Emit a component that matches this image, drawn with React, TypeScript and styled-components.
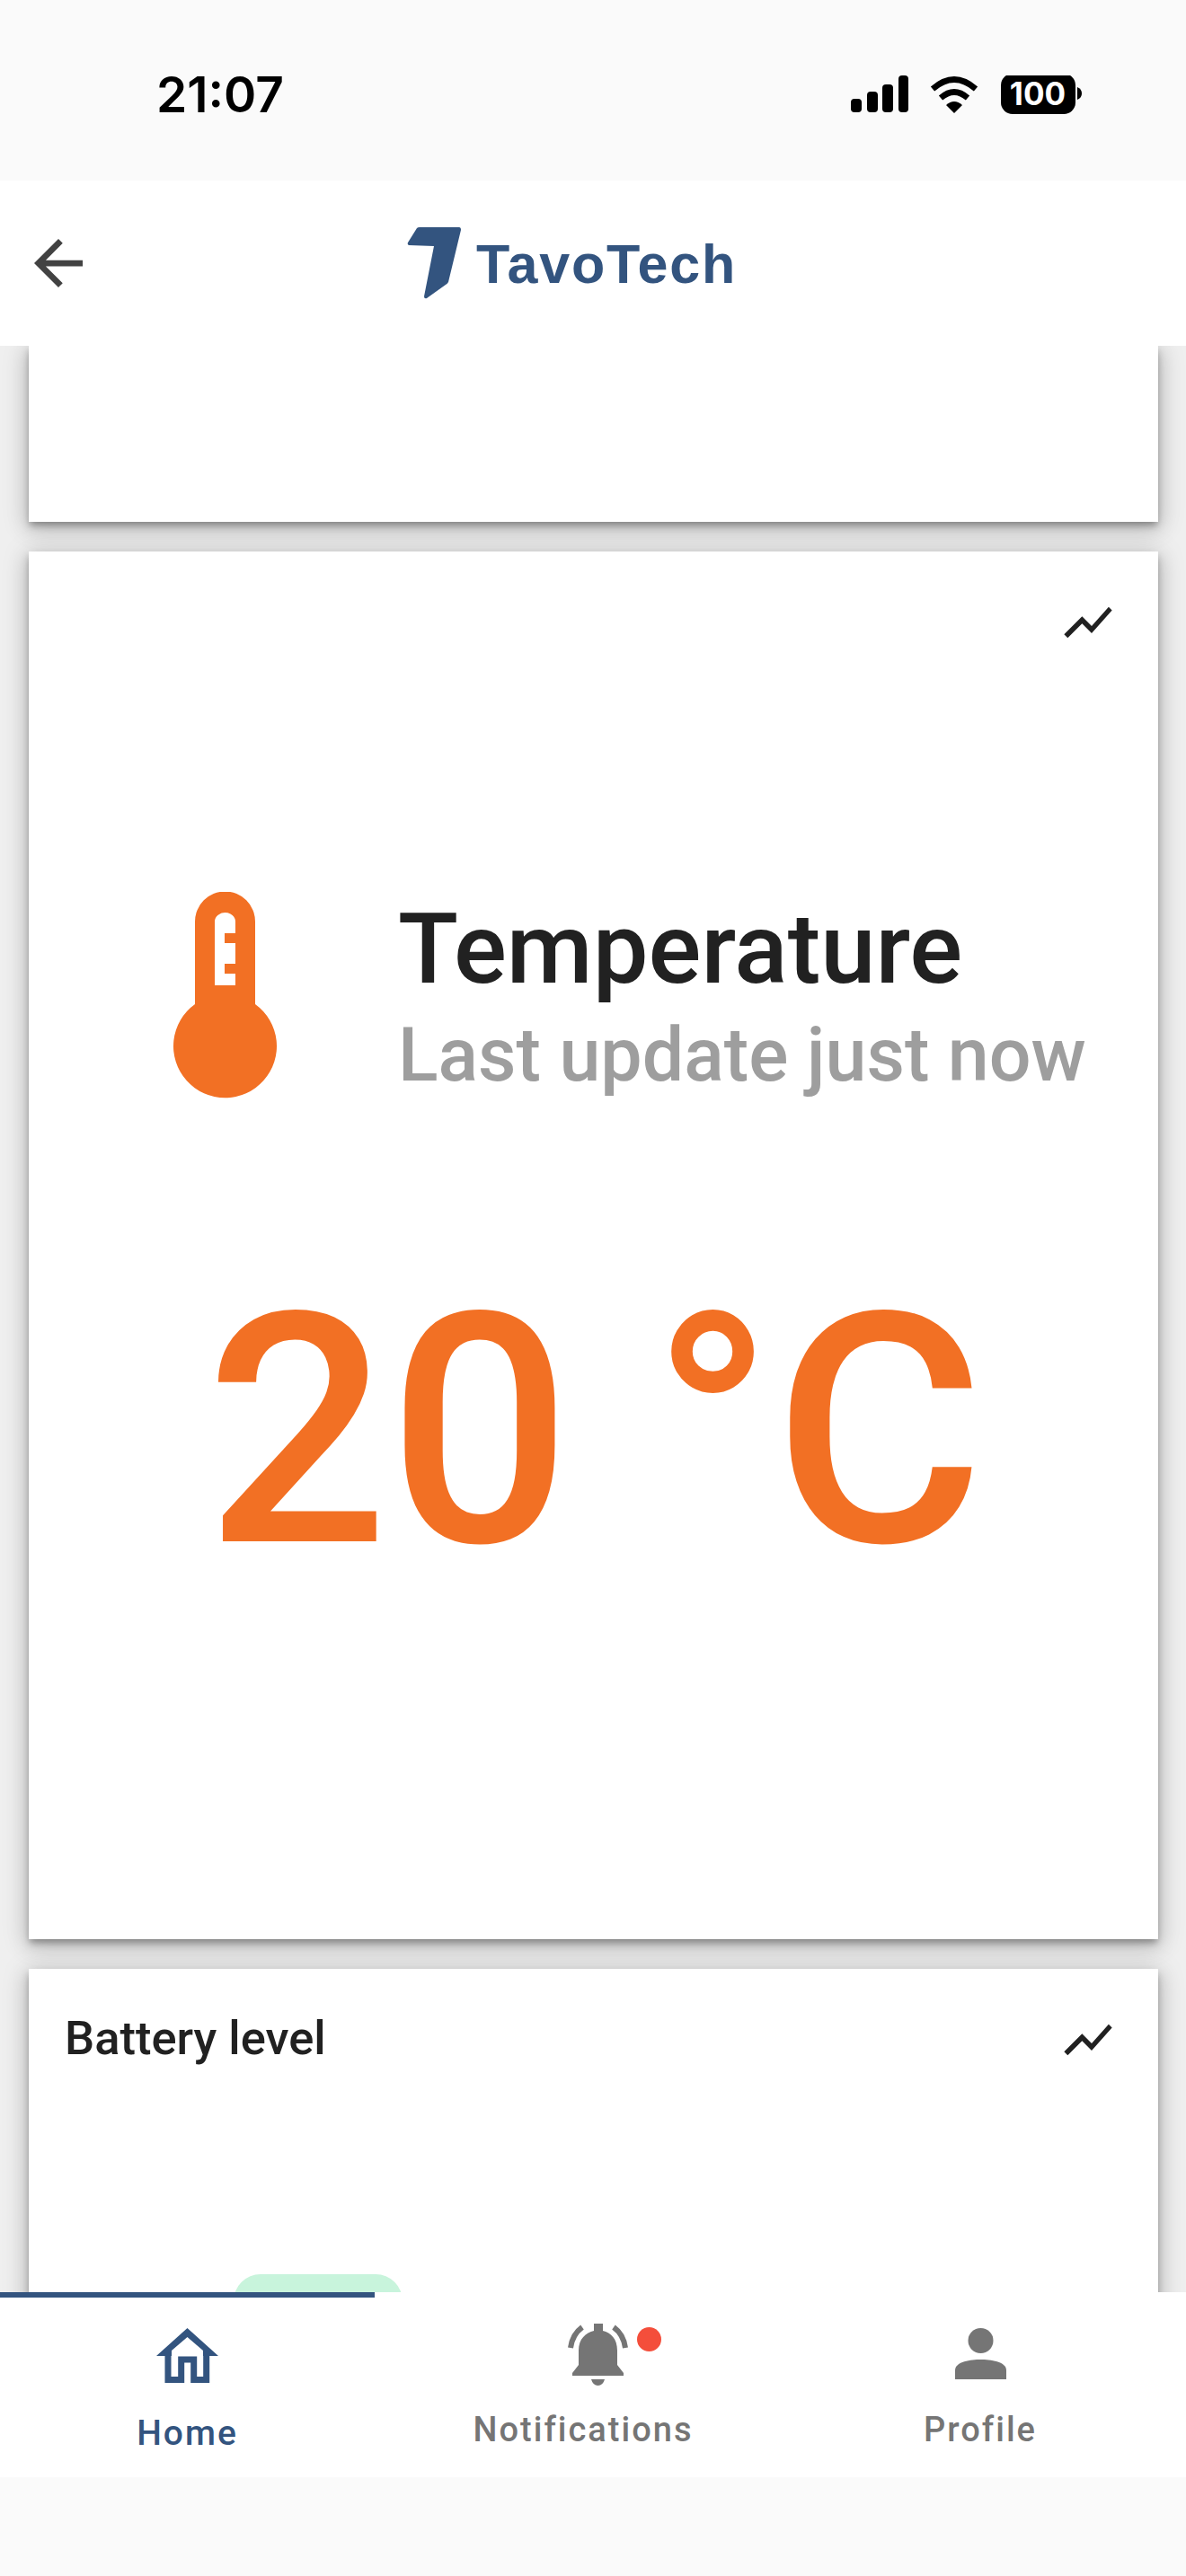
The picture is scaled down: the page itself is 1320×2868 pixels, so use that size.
import React from "react";
import styled, { createGlobalStyle } from "styled-components";

const Global = createGlobalStyle`
  html, body { margin: 0; padding: 0; background: #fafafa; }
  * { box-sizing: border-box; }
`;

const Page = styled.div`
  width: 1320px;
  height: 2868px;
  display: flex;
  flex-direction: column;
  overflow: hidden;
  font-family: Roboto, "Liberation Sans", sans-serif;
`;

const StatusBar = styled.div`
  height: 201px;
  flex: none;
  background: #fafafa;
  display: flex;
  align-items: flex-start;
  justify-content: space-between;
  padding: 70px 115px 0 174px;
`;

const Clock = styled.div`
  font-family: Inter, sans-serif;
  font-weight: 600;
  font-size: 55px;
  line-height: 70px;
  color: #000;
`;

const StatusIcons = styled.div`
  display: flex;
  align-items: flex-start;
  padding-top: 14px;
`;

const Header = styled.header`
  height: 184px;
  flex: none;
  background: #fff;
  display: flex;
  align-items: center;
  padding-left: 38px;
  position: relative;
  z-index: 2;
`;

const BackButton = styled.div`
  width: 54px;
  height: 54px;
  flex: none;
`;

const Logo = styled.div`
  display: flex;
  align-items: flex-start;
  margin-left: 361px;
`;

const LogoText = styled.span`
  font-family: "Liberation Sans", Arial, sans-serif;
  font-weight: 700;
  font-size: 61px;
  letter-spacing: 1.8px;
  line-height: 72px;
  color: #33547f;
  margin: 5px 0 0 17px;
`;

const Scroller = styled.main`
  flex: 1;
  min-height: 0;
  overflow: hidden;
  background: #efefef;
  padding: 0 31px 0 32px;
  display: flex;
  flex-direction: column;
  gap: 33px;
`;

const Card = styled.section<{ $height: number }>`
  flex: none;
  height: ${(p) => p.$height}px;
  background: #fff;
  position: relative;
  box-shadow: 0 5px 8px -1px rgba(0, 0, 0, 0.34), 0 8px 22px 2px rgba(0, 0, 0, 0.14),
    0 3px 28px 4px rgba(0, 0, 0, 0.1);
`;

const ChartAction = styled.div`
  position: absolute;
  top: 47px;
  right: 46px;
  width: 64px;
  height: 64px;
`;

const TempRow = styled.div`
  display: flex;
  align-items: flex-start;
  padding: 379px 0 0 161px;
`;

const TempText = styled.div`
  margin-left: 135px;
  display: flex;
  flex-direction: column;
`;

const TempTitle = styled.div`
  font-weight: 500;
  font-size: 110px;
  line-height: 122px;
  margin-top: 3px;
  color: #212121;
`;

const TempSub = styled.div`
  font-weight: 500;
  font-size: 82.5px;
  line-height: 98px;
  color: #9e9e9e;
  margin-top: 8px;
`;

const Reading = styled.div`
  margin-top: 155px;
  padding-left: 3px;
  font-weight: 500;
  font-size: 358px;
  line-height: 430px;
  text-align: center;
  color: #f27024;
  white-space: nowrap;
`;

const CardTitle = styled.div`
  padding: 47px 0 0 40px;
  font-weight: 500;
  font-size: 52.5px;
  line-height: 60px;
  color: #212121;
`;

const Pill = styled.div`
  width: 188px;
  height: 60px;
  margin: 233px 0 0 228px;
  background: #c8f4dc;
  border-radius: 32px;
`;

const NavBar = styled.nav`
  position: relative;
  flex: none;
  height: 206px;
  background: #fff;
  display: grid;
  grid-template-columns: 417px 464px 420px;
  z-index: 2;
`;

const NavIndicator = styled.div`
  position: absolute;
  left: 0;
  top: 0;
  width: 417px;
  height: 6px;
  background: #33547f;
`;

const NavItem = styled.div<{ $active?: boolean; $top: number }>`
  display: flex;
  flex-direction: column;
  align-items: center;
  color: ${(p) => (p.$active ? "#33547f" : "#757575")};
  padding-top: ${(p) => p.$top}px;
`;

const NavIcon = styled.div<{ $shift?: number }>`
  position: relative;
  height: 70px;
  display: flex;
  align-items: flex-start;
  transform: translateX(${(p) => p.$shift ?? 0}px);
`;

const NavLabel = styled.div<{ $active?: boolean; $gap: number }>`
  font-weight: 500;
  font-size: ${(p) => (p.$active ? 39 : 38)}px;
  letter-spacing: 2px;
  line-height: 44px;
  margin-top: ${(p) => p.$gap}px;
`;

const Badge = styled.span`
  position: absolute;
  left: 79px;
  top: 4px;
  width: 27px;
  height: 27px;
  border-radius: 50%;
  background: #f44e3b;
`;

const BottomInset = styled.div`
  flex: none;
  height: 110px;
  background: #fafafa;
`;

const ChartIcon = () => (
  <svg viewBox="0 0 24 24" width="64" height="64" fill="#212121">
    <path d="M3.5 18.49l6-6.01 4 4L22 6.92l-1.41-1.41-7.09 7.97-4-4L2 16.99z" />
  </svg>
);

const App = () => (
  <Page>
    <Global />
    <StatusBar>
      <Clock>21:07</Clock>
      <StatusIcons>
        <svg width="258" height="46" viewBox="0 0 258 46">
          <g fill="#000">
            <rect x="0" y="26" width="12" height="15" rx="4" />
            <rect x="18" y="18" width="12" height="23" rx="4" />
            <rect x="35" y="10" width="12" height="31" rx="4" />
            <rect x="53" y="0" width="11" height="41" rx="4" />
          </g>
          <g fill="none" stroke="#000" strokeWidth="6.5">
            <path d="M91 15 Q115 -6 139 15" />
            <path d="M100 25 Q115 12 130 25" />
          </g>
          <path d="M106 33 Q115 25 124 33 L115 42 Z" fill="#000" />
          <rect x="167" y="-2" width="83" height="45" rx="13" fill="#000" />
          <path d="M252 13 Q257 15 257 20 Q257 25 252 27 Z" fill="#000" />
          <text
            x="208"
            y="33"
            textAnchor="middle"
            fontFamily="Inter, sans-serif"
            fontWeight="700"
            fontSize="35"
            fill="#fff"
          >
            100
          </text>
        </svg>
      </StatusIcons>
    </StatusBar>
    <Header>
      <BackButton>
        <svg viewBox="4 4 16 16" width="54" height="54" fill="#424242">
          <path d="M20 11H7.83l5.59-5.59L12 4l-8 8 8 8 1.41-1.41L7.83 13H20v-2z" />
        </svg>
      </BackButton>
      <Logo>
        <svg width="60" height="80" viewBox="0 0 60 80">
          <path
            d="M11 1 Q12 0 14 0 H58 Q60 0 60 3 L46 61 Q45 63 43 64 L22 79 Q19 80 19 77 L30 21 L2 20 Q0 19 1 17 Z"
            fill="#33547f"
          />
        </svg>
        <LogoText>TavoTech</LogoText>
      </Logo>
    </Header>
    <Scroller>
      <Card $height={196} />
      <Card $height={1545}>
        <ChartAction>
          <ChartIcon />
        </ChartAction>
        <TempRow>
          <svg width="115" height="230" viewBox="0 0 115 230">
            <path
              fillRule="evenodd"
              fill="#f27024"
              d="M24 33 A33.5 33.5 0 0 1 91 33 V125 A57.5 57.5 0 1 1 24 125 Z M46 33 V104 H69 V91 H57 V80 H69 V57 H57 V46 H69 V33 A11.5 10 0 0 0 46 33 Z"
            />
          </svg>
          <TempText>
            <TempTitle>Temperature</TempTitle>
            <TempSub>Last update just now</TempSub>
          </TempText>
        </TempRow>
        <Reading>20 °C</Reading>
      </Card>
      <Card $height={600}>
        <ChartAction>
          <ChartIcon />
        </ChartAction>
        <CardTitle>Battery level</CardTitle>
        <Pill />
      </Card>
    </Scroller>
    <NavBar>
      <NavIndicator />
      <NavItem $active $top={40}>
        <NavIcon>
          <svg viewBox="0 0 69 61" width="69" height="61">
            <path fill="currentColor" d="M34.5 0 L69 31 H52 V25 L34.5 10 L17 25 V31 H0 Z" />
            <path fill="none" stroke="currentColor" strokeWidth="7" d="M13 27 V57.5 H27.7 V35 H41.7 V57.5 H55.7 V27" />
          </svg>
        </NavIcon>
        <NavLabel $active $gap={25}>Home</NavLabel>
      </NavItem>
      <NavItem $top={35}>
        <NavIcon $shift={16}>
          <svg viewBox="0 0 71 69" width="71" height="69" fill="currentColor">
            <path d="M31 0 H41 V8 C50 10 57 17 57 30 V46 L64 55 V58 H7 V55 L14 46 V30 C14 17 22 10 31 8 Z" />
            <path d="M28 62 H43 Q41 69 35.5 69 Q30 69 28 62 Z" />
            <path d="M5 27 Q7 12 18 4" fill="none" stroke="currentColor" strokeWidth="6" />
            <path d="M66 27 Q64 12 53 4" fill="none" stroke="currentColor" strokeWidth="6" />
          </svg>
          <Badge />
        </NavIcon>
        <NavLabel $gap={26}>Notifications</NavLabel>
      </NavItem>
      <NavItem $top={40}>
        <NavIcon>
          <svg viewBox="0 0 57 57" width="57" height="57" fill="currentColor">
            <circle cx="28.5" cy="14" r="14" />
            <path d="M0 57 V47 C0 37 18 35 28.5 35 C39 35 57 37 57 47 V57 Z" />
          </svg>
        </NavIcon>
        <NavLabel $gap={21}>Profile</NavLabel>
      </NavItem>
    </NavBar>
    <BottomInset />
  </Page>
);

export default App;
